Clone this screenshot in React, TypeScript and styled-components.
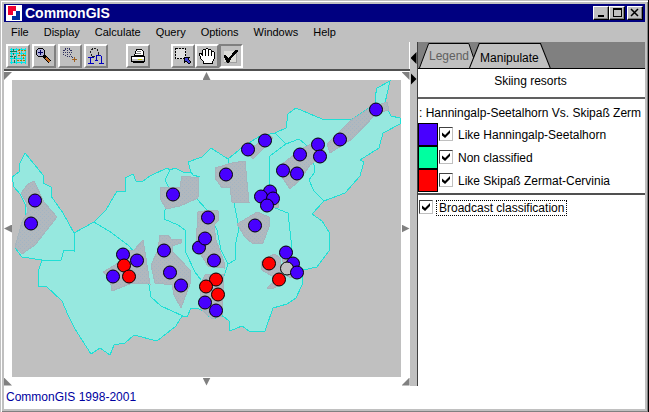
import React, { useState } from 'react';
import styled, { createGlobalStyle, css } from 'styled-components';

const FACE = '#c0c0c0';

const GlobalStyle = createGlobalStyle`
  *, *::before, *::after { box-sizing: border-box; }
  body { margin: 0; background: ${FACE}; }
  button { font: inherit; color: inherit; padding: 0; border: 0; background: none; }
`;

const Window = styled.main`
  display: flex;
  flex-direction: column;
  min-height: 100vh;
  background: ${FACE};
  border-right: 1px solid #000;
  border-bottom: 1px solid #000;
  box-shadow: inset 1px 1px 0 ${FACE}, inset 2px 2px 0 #fff, inset -1px -1px 0 #808080;
  padding: 4px 3px 3px 4px;
  font: 12px/16px 'Liberation Sans', Arial, sans-serif;
  color: #000;
`;

const TitleBar = styled.header`
  display: flex;
  align-items: center;
  height: 18px;
  padding: 0 2px;
  background: #000080;
  color: #fff;
`;

const Title = styled.h1`
  flex: 1;
  margin: 0 3px;
  font-size: 14px;
  line-height: 18px;
`;

const CaptionButton = styled.button<{ $apart?: boolean }>`
  display: grid;
  place-items: center;
  width: 16px;
  height: 14px;
  margin-left: ${(p) => (p.$apart ? 2 : 0)}px;
  background: ${FACE};
  border: 1px solid;
  border-color: #fff #000 #000 #fff;
  box-shadow: inset -1px -1px 0 #808080;
`;

const Main = styled.div`
  flex: 1;
  display: grid;
  grid-template-columns: minmax(0, 1fr) 8px 227px;
  grid-template-rows: 20px auto minmax(0, 1fr) 23px;
  grid-template-areas:
    'menu menu menu'
    'tools split side'
    'map split side'
    'foot foot foot';
`;

const MenuBar = styled.nav`
  grid-area: menu;
  display: flex;
  gap: 15px;
  padding-left: 7px;
  font-size: 11px;
  line-height: 20px;
`;

const ToolBar = styled.div`
  grid-area: tools;
  display: flex;
  align-items: center;
  height: 27px;
  padding-left: 2px;
  border-right: 1px solid #fff;
`;

const ToolGroup = styled.div<{ $gap: number; $after: number }>`
  display: flex;
  gap: ${(p) => p.$gap}px;
  margin-right: ${(p) => p.$after}px;
`;

const ToolButton = styled.button<{ $pressed?: boolean }>`
  display: grid;
  place-items: center;
  width: 24px;
  height: 24px;
  border: 2px solid;
  border-color: ${(p) => (p.$pressed ? '#808080 #fff #fff #808080' : '#fff #808080 #808080 #fff')};
  background: ${FACE};
`;

const MapPane = styled.section`
  grid-area: map;
  display: grid;
  grid-template-columns: 8px minmax(0, 1fr) 9px;
  grid-template-rows: 8px minmax(0, 1fr) 9px;
  align-items: center;
  justify-items: center;
  padding-top: 1px;
  border-top: 2px solid #505050;
  background: #fff;
`;

const arrowShapes = {
  nw: '0 0, 100% 0, 0 100%',
  n: '50% 0, 100% 100%, 0 100%',
  ne: '0 0, 100% 0, 100% 100%',
  w: '0 50%, 100% 0, 100% 100%',
  e: '0 0, 100% 50%, 0 100%',
  sw: '0 0, 100% 100%, 0 100%',
  s: '0 0, 100% 0, 50% 100%',
  se: '100% 0, 100% 100%, 0 100%',
};

const PanArrow = styled.button<{ $dir: keyof typeof arrowShapes }>`
  width: 8px;
  height: 8px;
  background: #808080;
  clip-path: polygon(${(p) => arrowShapes[p.$dir]});
`;

const MapView = styled.svg`
  display: block;
  width: 100%;
  height: 100%;
  min-height: 0;
  background: ${FACE};
`;

const Splitter = styled.div`
  grid-area: split;
  display: flex;
  flex-direction: column;
  align-items: center;
  gap: 9px;
  padding-top: 10px;
  background: ${FACE};
  border-right: 1px solid #404040;
`;

const SplitArrow = styled.button<{ $dir: 'w' | 'e' }>`
  width: 6px;
  height: 12px;
  background: #000;
  clip-path: polygon(${(p) => arrowShapes[p.$dir]});
`;

const Side = styled.aside`
  grid-area: side;
  min-width: 0;
  background: #fff;
`;

const TabStrip = styled.div`
  display: flex;
  height: 27px;
  padding-left: 1px;
  background: #808080;
  border-bottom: 1px solid #000;
`;

const Tab = styled.button<{ $active?: boolean }>`
  position: relative;
  height: 26px;
  padding: ${(p) => (p.$active ? '5px 12px 0 11px' : '2px 8px 0 10px')};
  margin-left: ${(p) => (p.$active ? '-8px' : '0')};
  color: ${(p) => (p.$active ? '#000' : '#606060')};
  isolation: isolate;
`;

const TabShape = styled.svg`
  position: absolute;
  inset: 0;
  z-index: -1;
  width: 100%;
  height: 100%;
`;

const Heading = styled.h2`
  margin: 0;
  height: 30px;
  padding: 4px 2px 0 0;
  border-bottom: 2px solid #606060;
  font: inherit;
  text-align: center;
`;

const ClassList = styled.fieldset`
  margin: 0;
  padding: 0;
  min-width: 0;
  border: 0;
  border-bottom: 2px solid #505050;
`;

const ClassTitle = styled.legend`
  width: 100%;
  height: 24px;
  padding: 6px 0 0 1px;
  white-space: nowrap;
`;

const ClassRow = styled.div`
  display: flex;
  height: 23px;
  &:last-child { margin-bottom: 1px; }
`;

const Swatch = styled.span<{ $color: string }>`
  width: 20px;
  background: ${(p) => p.$color};
  border: 1px solid #000;
`;

const CheckLabel = styled.label<{ $top: number }>`
  display: flex;
  align-items: flex-start;
  gap: 5px;
  margin: ${(p) => p.$top}px 0 0 1px;
  line-height: 17px;
`;

const tick = css`
  content: '';
  width: 8px;
  height: 8px;
  background: #000;
  clip-path: polygon(0 30%, 38% 62%, 100% 0, 100% 36%, 38% 100%, 0 68%);
`;

const CheckBox = styled.input`
  appearance: none;
  flex: none;
  display: grid;
  place-items: center;
  width: 14px;
  height: 14px;
  margin: 0;
  background: #fff;
  border: 1px solid;
  border-color: #404040 ${FACE} ${FACE} #404040;
  &:checked::before { ${tick} }
`;

const Focused = styled.span`
  margin-left: -2px;
  padding: 0 2px;
  border: 1px dotted #000;
  line-height: 14px;
`;

const Footer = styled.footer`
  grid-area: foot;
  padding: 3px 2px;
  background: #fff;
  color: #0000a0;
`;

const land =
  '12,177 19,172 19,165 25,153 43,175 43,183 51,187 51,196 63,213 74,233 94,222 106,210 117,191 125,191 125,178 133,174 136,181 142,182 150,176 167,168 170,170 175,168 185,173 191,172 188,162 202,157 211,148 228,159 244,146 260,136 275,133 286,128 288,114 296,108 322,119 351,120 375,104 375,97 377,88 390,81 385,103 391,116 400,118 400,124 383,133 379,148 360,160 364,162 360,176 345,193 324,201 312,214 322,221 329,232 329,251 317,267 303,270 302,285 296,298 287,304 273,308 265,331 249,331 242,326 230,331 229,321 223,316 212,319 203,311 197,308 191,308 187,317 182,316 176,326 157,341 134,335 125,343 114,345 110,355 100,348 91,354 75,329 68,315 62,301 46,286 38,287 38,272 42,260 22,257 15,248 25,220 25,204 20,194 14,187';

const borders = [
  '74,233 74,251 64,250 61,260 42,260',
  '94,222 112,233 128,245 143,262 149,285 151,297 161,306 183,316',
  '170,170 165,180 170,190 165,210 164,219 178,225 185,230 186,253 195,272 201,280',
  '191,172 193,175 200,177',
  '197,199 207,210 217,230 221,250 228,264 235,260 236,242 239,228 234,203',
  '228,264 224,276 222,316',
  '228,159 228,163',
  '275,208 288,213 291,240 291,255',
  '269,186 270,156 286,144 299,139 311,149 314,165 314,173 309,180 314,191 324,201',
  '275,133 286,144',
];

const zones = [
  '34,181 28,184 21,193 26,202 28,212 22,222 15,247 22,254 35,245 57,217 44,202',
  '160,188 180,187 182,176 199,178 198,198 180,206 166,209 160,198',
  '215,168 232,163 245,161 249,202 232,202 230,187 222,188 215,178',
  '198,212 211,210 218,211 218,221 214,225 216,240 224,262 224,268 208,266 196,247 197,228',
  '160,235 168,235 171,239 181,239 181,243 172,246 173,252 190,270 190,284 181,308 174,295 172,285 155,283 151,265 158,250',
  '143,240 146,258 150,284 132,283 112,291 110,279 103,272 120,262 118,250 134,250',
  '257,212 269,217 269,227 263,243 252,243 245,237 237,224',
  '256,197 270,188 279,200 278,208 262,206',
  '275,254 280,258 281,273 275,278 262,270 261,262 270,256',
  '282,250 290,260 300,270 300,276 290,278 284,273',
  '267,288 275,280 280,285 272,289',
  '205,275 224,274 222,316 212,319 200,308 200,285',
  '327,144 350,121 370,108 387,102 389,110 377,113 352,139 330,153',
  '281,165 300,150 318,140 326,154 310,165 300,180 290,189 282,177',
  '246,152 270,135 273,138 262,150 253,159',
];

type Site = [number, number, string];
const B = '#4800ff';
const R = '#ff0000';
const sites: Site[] = [
  [376, 109, B], [340, 139, B], [318, 144, B], [320, 156, B], [300, 154, B], [283, 170, B],
  [297, 173, B], [265, 140, B], [248, 149, B], [226, 174, B], [173, 194, B], [35, 200, B],
  [31, 223, B], [270, 191, B], [261, 196, B], [273, 198, B], [267, 205, B], [255, 225, B],
  [208, 217, B], [199, 247, B], [205, 238, B], [214, 260, B], [164, 250, B], [170, 272, B],
  [181, 285, B], [123, 254, B], [137, 260, B], [113, 276, B], [124, 265, R], [129, 276, R],
  [216, 279, R], [206, 286, R], [218, 294, R], [205, 302, B], [216, 310, B], [286, 252, B],
  [293, 263, B], [287, 268, FACE], [297, 272, B], [269, 263, R], [279, 279, R],
];

const ResortMap = () => (
  <MapView viewBox="12 80 389 297" preserveAspectRatio="none" role="img" aria-label="Skiing resorts map">
    <defs>
      <pattern id="dots" width="4" height="4" patternUnits="userSpaceOnUse">
        <rect width="4" height="4" fill="#b1b8be" />
        <path d="M0 0h1v1H0zM2 2h1v1H2z" fill="#a2b4c4" />
      </pattern>
    </defs>
    <g shapeRendering="crispEdges" strokeWidth="1">
      <polygon points={land} fill="#96e8df" stroke="#20dfd5" />
      {borders.map((p) => <polyline key={p} points={p} fill="none" stroke="#20dfd5" />)}
      {zones.map((p) => <polygon key={p} points={p} fill="url(#dots)" stroke="#a6b4bc" />)}
    </g>
    {sites.map(([x, y, c]) => (
      <circle key={`${x}-${y}`} cx={x} cy={y + 0.5} r="6.5" fill={c} stroke="#000" strokeWidth="1" />
    ))}
  </MapView>
);

const Icon = ({ children }: { children: React.ReactNode }) => (
  <svg width="20" height="20" viewBox="0 0 20 20" fill="none" shapeRendering="crispEdges" aria-hidden="true">
    {children}
  </svg>
);

const Logo = () => (
  <svg width="16" height="16" viewBox="0 0 16 16" shapeRendering="crispEdges" aria-hidden="true">
    <path fill="#fff" d="M0 0h16v16H0z" />
    <path fill="#f00030" d="M2 1h8v5H7v4H2z" />
    <path fill="#0030a0" d="M10 6h4v9H6v-4h4z" />
  </svg>
);

const FullExtent = () => (
  <Icon>
    <path stroke="#00e8e8" d="M2 3.5h16M2 7.5h16M2 12.5h16M2 16.5h16M3.5 2v16M8.5 2v16M13.5 2v16M17.5 2v16" />
    <path stroke="#008060" strokeDasharray="3 1" d="M2 5.5h7M5.5 3v6M2 10.5h6M6.5 10v8" />
    <path stroke="#a08000" strokeDasharray="2 1" d="M10 4.5h8M11.5 3v7M10 9.5h8M15.5 8v7M9 14.5h8" />
  </Icon>
);

const ZoomIn = () => (
  <Icon>
    <path fill="#b0b0d8" d="M4 3h5v1h1v5h-1v1H4v-1H3V4h1z" />
    <path stroke="#000" d="M4 2.5h5M4 10.5h5M2.500 4v5M10.500 4v5M3 3.500h1M9 3.500h1M3 9.500h1M9 9.500h1" />
    <path stroke="#000060" d="M4 6.500h5M6.500 4v5" />
    <path stroke="#000" strokeWidth="4" d="M10 10l6 6" />
    <path stroke="#c06820" strokeWidth="2" d="M12 12l4 4" />
  </Icon>
);

const ZoomOut = () => (
  <Icon>
    <circle cx="7.500" cy="6.500" r="4" stroke="#303060" strokeDasharray="1 1" />
    <path stroke="#303060" strokeDasharray="1 1" d="M5 6.500h5M7.500 4v5M11 10l3 3" />
    <path stroke="#a06020" d="M12 13.500h5M14.500 11v5" />
  </Icon>
);

const ZoomLayer = () => (
  <Icon>
    <circle cx="8.500" cy="6.500" r="4" stroke="#202020" strokeDasharray="2 1" />
    <path stroke="#0000c0" d="M2 11.500h6M4.500 11v6M2 17.500h6M10 9.500h5M15.500 10v8M10.500 10v4M9 14.500h3M13 17.500h5" />
  </Icon>
);

const Print = () => (
  <Icon>
    <path fill="#fff" stroke="#000" d="M6.500 9.500l2-6h5l2 2v4z" />
    <path stroke="#808080" d="M9 5.500h4M8 7.500h5" />
    <path fill="#fff" stroke="#000" d="M3.500 10.500h13v5h-13z" />
    <path fill="#c0c0c0" d="M4 13h12v2H4z" />
    <path stroke="#c8d000" d="M10 13.500h4" />
    <path stroke="#000" d="M5 16.500h11" />
  </Icon>
);

const SelectArea = () => (
  <Icon>
    <path fill="#e0e0e0" stroke="#000" strokeDasharray="2 1" d="M2.500 2.500h10v10h-10z" />
    <path fill="#4040d0" stroke="#000" d="M11.500 11.500h5l-1.500 1.500 3 3-2 2-3-3-1.500 1.500z" />
  </Icon>
);

const Hand = () => (
  <Icon>
    <path
      fill="#fff"
      stroke="#000"
      d="M6.500 17.500v-2l-3-3v-2l-1-1v-2h2l1 2v-5l1-1h1l1 1v-1l1-1h1l1 1v1l1-1h1l1 1v2l1-1h1l1 1v6l-2 3v2z"
    />
    <path stroke="#000" d="M8.500 5v5M11.500 5v5M14.500 6v4" />
  </Icon>
);

const Check = () => (
  <Icon>
    <path fill="#dcdcd8" d="M3 5h12v12H3z" />
    <path stroke="#a0a0a0" d="M3 16.500h12.500V5" />
    <path fill="#000" d="M3 9h2l2 3 1 0 6-8h3v1l-7 8-2 4H6l-3-6z" />
  </Icon>
);

type Tool = [string, () => React.JSX.Element];
const groups: { gap: number; after: number; tools: Tool[] }[] = [
  {
    gap: 2,
    after: 18,
    tools: [['Full extent', FullExtent], ['Zoom in', ZoomIn], ['Zoom out', ZoomOut], ['Zoom to layer', ZoomLayer]],
  },
  { gap: 0, after: 21, tools: [['Print', Print]] },
  { gap: 0, after: 0, tools: [['Select area', SelectArea], ['Pan', Hand], ['Select objects', Check]] },
];

const classes = [
  { name: 'Like Hanningalp-Seetalhorn', color: B },
  { name: 'Non classified', color: '#00ffa0' },
  { name: 'Like Skipaß Zermat-Cervinia', color: R },
];

export default function App() {
  const [tool, setTool] = useState('Select objects');

  return (
    <>
      <GlobalStyle />
      <Window>
        <TitleBar>
          <Logo />
          <Title>CommonGIS</Title>
          <CaptionButton aria-label="Minimize">
            <svg width="12" height="10" shapeRendering="crispEdges"><path fill="#000" d="M3 7h6v2H3z" /></svg>
          </CaptionButton>
          <CaptionButton aria-label="Maximize">
            <svg width="12" height="10" shapeRendering="crispEdges"><path fill="#000" fillRule="evenodd" d="M2 0h9v9H2zM3 2v6h7V2z" /></svg>
          </CaptionButton>
          <CaptionButton aria-label="Close" $apart>
            <svg width="12" height="10"><path stroke="#000" strokeWidth="1.500" d="M2 1l7 7M9 1L2 8" /></svg>
          </CaptionButton>
        </TitleBar>
        <Main>
          <MenuBar>
            {['File', 'Display', 'Calculate', 'Query', 'Options', 'Windows', 'Help'].map((m) => (
              <button key={m}>{m}</button>
            ))}
          </MenuBar>
          <ToolBar>
            {groups.map((g) => (
              <ToolGroup key={g.tools[0][0]} $gap={g.gap} $after={g.after}>
                {g.tools.map(([name, Glyph]) => (
                  <ToolButton key={name} aria-label={name} $pressed={tool === name} onClick={() => setTool(name)}>
                    <Glyph />
                  </ToolButton>
                ))}
              </ToolGroup>
            ))}
          </ToolBar>
          <MapPane>
            <PanArrow $dir="nw" aria-label="Pan north-west" />
            <PanArrow $dir="n" aria-label="Pan north" />
            <PanArrow $dir="ne" aria-label="Pan north-east" />
            <PanArrow $dir="w" aria-label="Pan west" />
            <ResortMap />
            <PanArrow $dir="e" aria-label="Pan east" />
            <PanArrow $dir="sw" aria-label="Pan south-west" />
            <PanArrow $dir="s" aria-label="Pan south" />
            <PanArrow $dir="se" aria-label="Pan south-east" />
          </MapPane>
          <Splitter>
            <SplitArrow $dir="w" aria-label="Widen side panel" />
            <SplitArrow $dir="e" aria-label="Widen map" />
          </Splitter>
          <Side>
            <TabStrip role="tablist">
              <Tab role="tab" aria-selected="false">
                <TabShape viewBox="0 0 60 26" preserveAspectRatio="none">
                  <path fill={FACE} stroke="#000" d="M0.500 26L10 1.500H51.500L60 26" />
                </TabShape>
                Legend
              </Tab>
              <Tab role="tab" aria-selected="true" $active>
                <TabShape viewBox="0 0 80 26" preserveAspectRatio="none">
                  <path fill={FACE} stroke="#000" d="M0.500 26L10 1.500H70L79.500 26" />
                </TabShape>
                Manipulate
              </Tab>
            </TabStrip>
            <Heading>Skiing resorts</Heading>
            <ClassList>
              <ClassTitle>: Hanningalp-Seetalhorn Vs. Skipaß Zerm</ClassTitle>
              {classes.map((c) => (
                <ClassRow key={c.name}>
                  <Swatch $color={c.color} />
                  <CheckLabel $top={4}>
                    <CheckBox type="checkbox" defaultChecked />
                    {c.name}
                  </CheckLabel>
                </ClassRow>
              ))}
            </ClassList>
            <CheckLabel $top={5}>
              <CheckBox type="checkbox" defaultChecked />
              <Focused>Broadcast classification</Focused>
            </CheckLabel>
          </Side>
          <Footer>CommonGIS 1998-2001</Footer>
        </Main>
      </Window>
    </>
  );
}
